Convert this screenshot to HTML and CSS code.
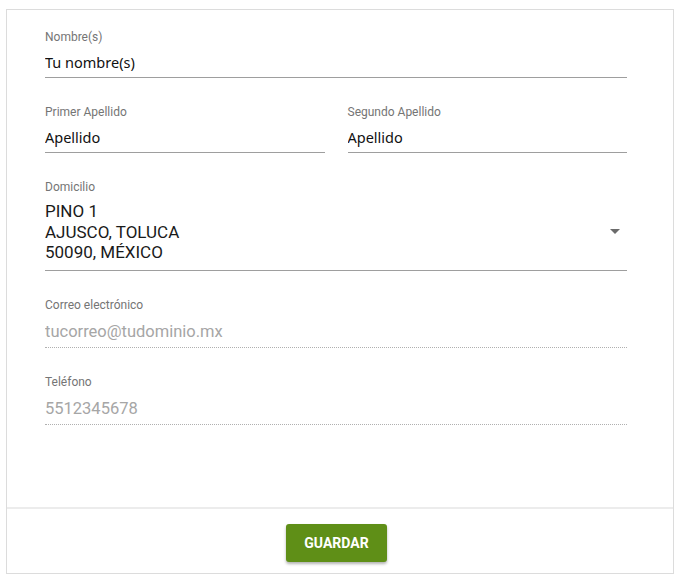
FILE: index.html
```html
<html>
	<head>
		<title>Datos personales</title>
		<link rel="stylesheet" href="styles.css">
	</head>
	<body>
		<div class="card">
			<div class="card-body">
				<div class="field">
					<label for="nombreInput">Nombre(s)</label>
					<input type="text" id="nombreInput" class="value" value="Tu nombre(s)">
				</div>
				<div class="row">
					<div class="field">
						<label for="primerInput">Primer Apellido</label>
						<input type="text" id="primerInput" class="value" value="Apellido">
					</div>
					<div class="field">
						<label for="segundoInput">Segundo Apellido</label>
						<input type="text" id="segundoInput" class="value" value="Apellido">
					</div>
				</div>
				<div class="field">
					<label>Domicilio</label>
					<div class="select">
						<div class="address">PINO 1<br>AJUSCO, TOLUCA<br>50090, MÉXICO</div>
						<span class="arrow"></span>
					</div>
				</div>
				<div class="field disabled">
					<label for="correoInput">Correo electrónico</label>
					<input type="email" id="correoInput" class="value" placeholder="tucorreo@tudominio.mx" disabled>
				</div>
				<div class="field disabled">
					<label for="telInput">Teléfono</label>
					<input type="tel" id="telInput" class="value" placeholder="5512345678" disabled>
				</div>
			</div>
			<div class="card-footer">
				<button class="btn-save">GUARDAR</button>
			</div>
		</div>
	</body>
</html>
```

FILE: styles.css
```css
body {
	margin: 9px 0 0 6px;
	background-color: #ffffff;
	font-family: Roboto, "Liberation Sans", sans-serif;
}

.card {
	width: 666px;
	height: 563px;
	border: 1px solid #dcdcdc;
	display: flex;
	flex-direction: column;
}

.card-body {
	flex: 1;
	padding: 19px 46px 0 38px;
}

.row {
	display: flex;
	gap: 23px;
}

.row .field {
	flex: 1;
}

.field {
	display: flex;
	flex-direction: column;
	margin-bottom: 26px;
}

.field label {
	font-size: 12px;
	line-height: 16px;
	color: #757575;
}

.field .value {
	border: none;
	border-bottom: 1px solid #9e9e9e;
	outline: none;
	padding: 0 0 2px 0;
	margin-top: 3px;
	height: 30px;
	font-family: "Noto Sans", sans-serif;
	font-size: 14.5px;
	color: #111111;
	background: transparent;
}

.field.disabled .value {
	font-family: Roboto, sans-serif;
	font-size: 16.5px;
	border-bottom: 1px dotted #b0b0b0;
	margin-top: 3px;
	padding: 0;
	height: 32px;
}

.field.disabled .value::placeholder {
	color: #a6a6a6;
}

.select {
	display: flex;
	align-items: center;
	margin-top: 6px;
	padding-bottom: 7px;
	border-bottom: 1px solid #9e9e9e;
}

.address {
	flex: 1;
	font-size: 17px;
	line-height: 20.5px;
	color: #1a1a1a;
}

.arrow {
	width: 0;
	height: 0;
	margin-right: 7px;
	border-left: 5px solid transparent;
	border-right: 5px solid transparent;
	border-top: 5px solid #6b6b6b;
}

.card-footer {
	height: 66px;
	border-top: 2px solid #ececec;
	display: flex;
	justify-content: center;
	padding: 15px 7px 0 0;
	box-sizing: border-box;
}

.btn-save {
	width: 101px;
	height: 38px;
	border: none;
	border-radius: 3px;
	background-color: #5f8f17;
	color: #ffffff;
	font-family: Roboto, sans-serif;
	font-weight: bold;
	font-size: 14px;
	box-shadow: 0px 2px 3px rgba(0,0,0,0.3);
}
```
